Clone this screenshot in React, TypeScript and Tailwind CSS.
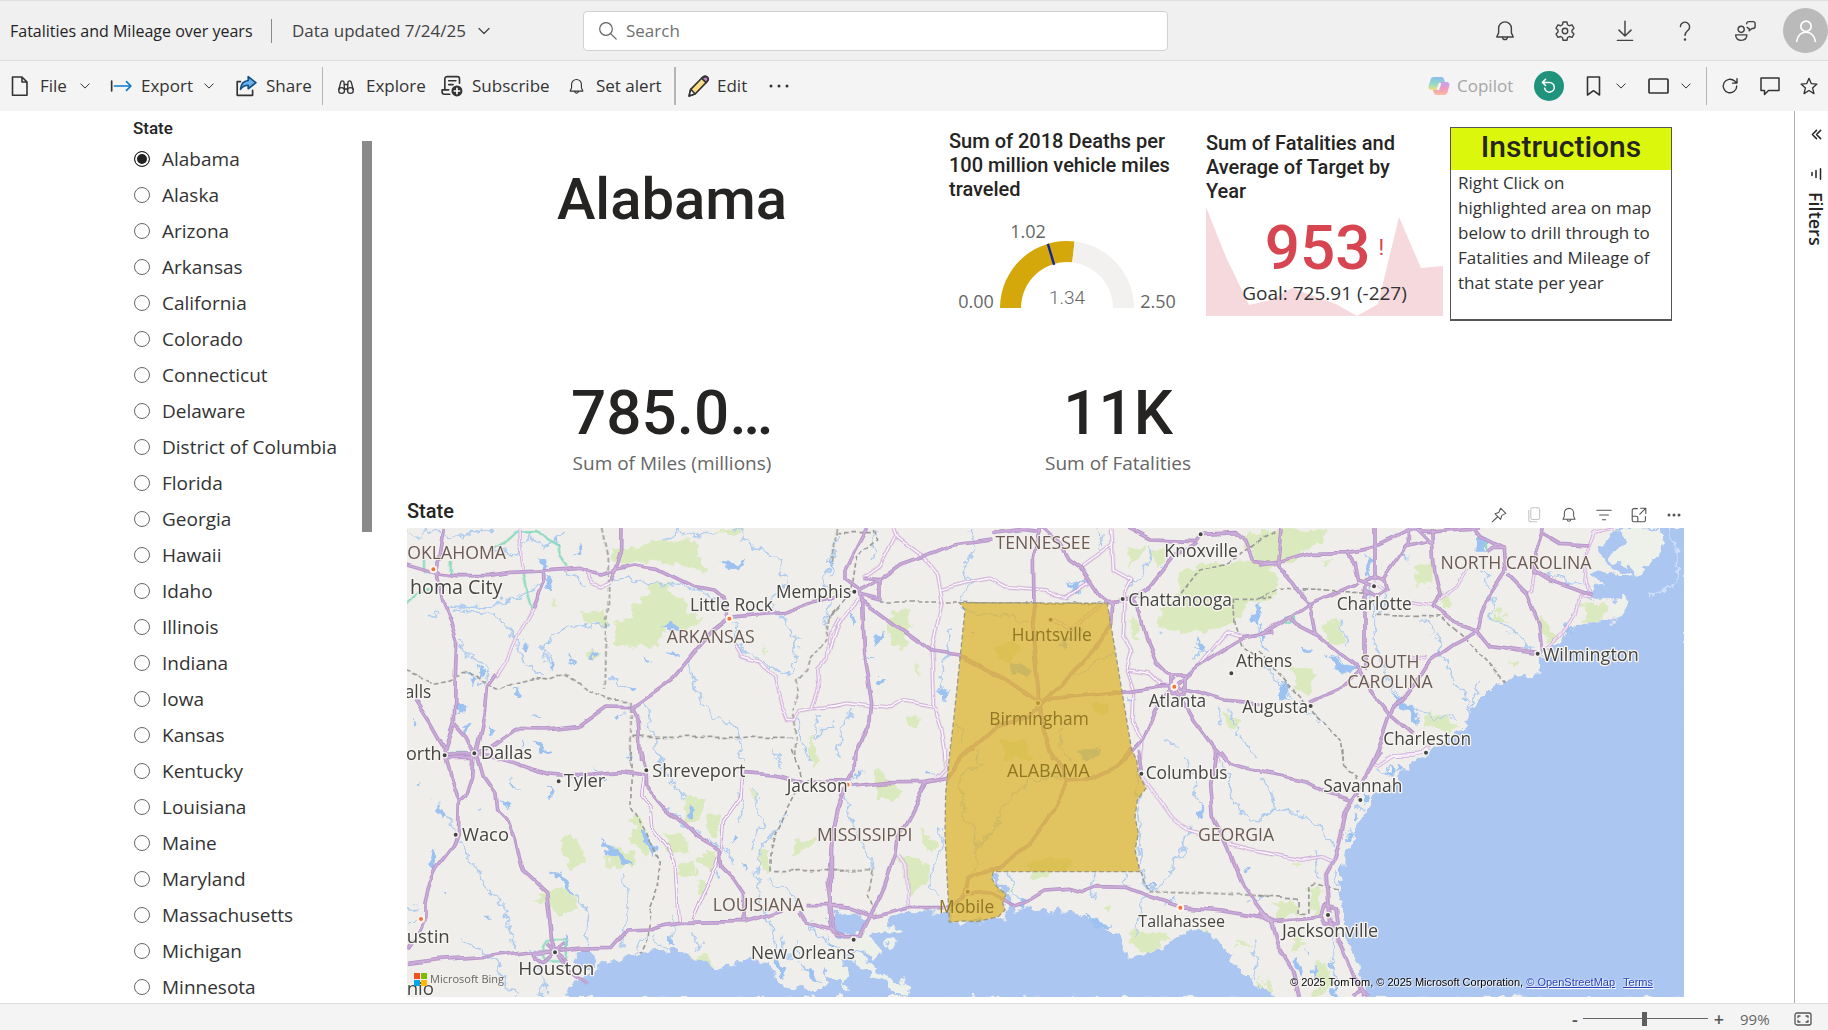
import React, { useState } from "react";

const STATES = [
  "Alabama", "Alaska", "Arizona", "Arkansas", "California", "Colorado", "Connecticut", "Delaware",
  "District of Columbia", "Florida", "Georgia", "Hawaii", "Idaho", "Illinois", "Indiana", "Iowa",
  "Kansas", "Kentucky", "Louisiana", "Maine", "Maryland", "Massachusetts", "Michigan", "Minnesota",
];

type IconProps = { children: React.ReactNode; className?: string; box?: string; sw?: number };

function Icon({ children, className = "size-5", box = "0 0 20 20", sw = 1.3 }: IconProps) {
  return (
    <svg viewBox={box} className={className + " shrink-0"} fill="none" stroke="currentColor" strokeWidth={sw} strokeLinecap="round" strokeLinejoin="round" aria-hidden="true">
      {children}
    </svg>
  );
}

const Chevron = ({ className = "size-3" }: { className?: string }) => (
  <Icon box="0 0 12 12" className={className} sw={1.2}><path d="M1 3.5l5 5 5-5" /></Icon>
);

const Bell = ({ className }: { className?: string }) => (
  <Icon className={className}>
    <path d="M10 1.7a5.8 5.8 0 0 0-5.8 5.8v4.2L2.5 15.4h15l-1.7-3.7V7.5A5.8 5.8 0 0 0 10 1.7z" />
    <path d="M7.8 15.6a2.2 2.2 0 0 0 4.4 0" />
  </Icon>
);

const Gear = () => (
  <Icon className="size-[22px]" box="0 0 24 24" sw={1.5}>
    <path d="M9.9 2.2h4.2l.7 3 1.9 1.1 3-.9 2.1 3.6-2.2 2.1v2.1l2.2 2.1-2.1 3.6-3-.9-1.9 1.1-.7 3H9.9l-.7-3-1.9-1.1-3 .9-2.1-3.6 2.2-2.1v-2.1L2.2 9l2.1-3.6 3 .9 1.9-1.1z" />
    <circle cx="12" cy="12" r="3" />
  </Icon>
);

/* ---------- Map data: six regional tiles of coast, parks, rivers and roads ---------- */

type Tile = {
  t: string;
  water: string[];
  land?: string[];
  parks: string[];
  rivers: string[];
  lakes: string[];
  borders: string[];
  major: string[];
  minor: string[];
  teal?: string[];
};

const TILES: Tile[] = [
  {
    t: "translate(0 0)",
    water: [],
    parks: [
      "M625 180L700 170 790 150 885 148 890 190 920 230 900 245 830 220 740 215 640 210z",
      "M955 114H1025L1010 140 970 128z",
      "M735 280L805 278 800 300 860 330 850 375 910 380 890 410 800 420 770 465 700 470 640 460 650 400 700 385 690 345 745 320z",
      "M540 370L620 365 622 400 560 400z",
      "M545 485L595 480 590 508 550 505z",
      "M445 330L480 335 460 345z",
      "M1235 740L1250 730 1245 810 1225 810z",
      "M1085 455L1110 490 1095 495z",
    ],
    rivers: [
      "M21 130L60 140 100 120 150 145 220 130 280 114",
      "M290 180L340 200 380 130 430 170 470 150 490 120",
      "M80 370L130 375 M130 345L220 355 290 340 360 320 400 300 430 260",
      "M160 360L260 370 320 390 335 440 370 500 400 540 430 560",
      "M170 450L200 500 260 520 265 560 240 590",
      "M440 520L430 470 460 430 520 410 620 400",
      "M480 245L530 260 560 290 M640 260L700 275 800 285 900 300 970 340",
      "M800 150L830 125 900 135 960 120",
      "M1000 114L1060 170 1140 210 1160 270 1120 330 1150 400 1190 450 1195 510 1160 560",
      "M1000 390L1010 460 1060 500 1130 540 1180 550",
      "M860 510L885 570 890 620 940 680 1010 710 1020 780 1025 810",
      "M620 560L660 580 710 600 M730 630L750 680 760 740 775 810",
      "M1310 130L1300 200 1270 260 1290 330 1270 400",
      "M1200 670L1195 740 1230 810 M1250 670L1255 740 1300 700",
    ],
    lakes: [
      "M415 200l20 5 8 30-10 20zM440 250l25 20-15 40-15-20zM545 165l-10 25-20 20 15-30zM470 130l20 25-10 10z",
      "M960 215l40 5 40-10-20 20-25 10z M780 410l40-5 25 10-30 15z M800 480l50 15-30 5z",
      "M370 455l20 15-15 15z M575 480l10 15-5 20-10-15z M505 490l15 15-10 15z",
      "M340 600l30 5-15 15zM395 680l30 2-20 8zM640 680l30-10-20 30zM180 640l30 10-35 30zM190 700l20 10-20 25zM270 710l15 20-15 10zM365 760l25 20-10 15zM400 750l45 30-20 10zM580 770l35 20zM200 540l30 30-15 20zM230 520l30 30-20 20z",
      "M440 490l20 40-10 5zM1090 460l15 30zM730 500l20 5-10 12zM680 590l35 10-15 5zM35 690l15 10-10 15z",
    ],
    borders: [
      "M608 114L625 200 620 420 615 600",
      "M21 545L60 560 100 580 150 570 190 550 240 570 300 600 340 580 400 565 450 570 490 553 520 570 560 600 640 630 693 632",
      "M693 632V810", "M700 742H1185",
      "M1312 114L1300 220 M1320 350L1290 380 1280 450 1230 500 1220 540 1190 570 1200 600 1180 660 1190 740 1190 800",
    ],
    major: [
      "M21 225L90 245 170 257 270 257 330 247 450 242 540 235 600 252 640 240 700 225 770 235 830 265 880 290 940 300 970 325 985 385",
      "M985 385L1010 380 1150 368 1240 335 1320 315",
      "M133 114L120 200 110 260 125 330 150 390 170 450 165 590 163 700 135 790",
      "M163 700L200 740 225 790",
      "M430 242L432 280 400 355 M290 550L262 590 255 680 230 790",
      "M230 795L270 770 345 718 430 720 535 710 620 648 695 650 760 605 820 560 890 475 940 420 985 385",
      "M695 650L715 700 722 810",
      "M666 114L665 180 650 230 630 270",
      "M45 630L90 700 135 780",
    ],
    minor: [
      "M400 355L350 440 320 510 290 560",
      "M565 245L570 280 600 290 625 275",
      "M360 114L362 200 368 250",
      "M1005 465L1025 500 1080 515 1120 560 1140 640 1160 688 1185 690 1200 662 1240 655 1320 645",
      "M1235 655L1255 600 1250 540 1285 505 1290 440 1320 380",
    ],
    teal: ["M280 175L300 165 350 122 410 120 440 150 475 170 480 200 500 230", "M368 250L380 310 395 360", "M21 345L50 310 90 300", "M155 210V257", "M75 210V250"],
  },
  {
    t: "translate(0 780)",
    water: [
      "M500 745L510 710 560 685 600 650 640 635 700 615 760 608 820 605 870 615 920 640 960 655 1005 645 1010 625 1060 632 1110 645 1125 690 1165 715 1200 705 1240 730 1290 700 1340 715V745z",
      "M520 640L545 600 575 605 590 640 560 670z",
      "M1280 500L1300 490H1330V555L1290 535z",
    ],
    parks: [
      "M480 270L510 250 555 300 550 340 510 355z", "M395 450L460 412 525 430 530 470 480 500 440 460z",
      "M620 310L650 290 710 310 700 350 630 355z", "M690 230L710 190 750 260 740 320 700 280z",
      "M850 140L915 150 905 200 860 220z", "M925 195L960 190 960 260 930 255z", "M790 250L845 245 870 300 800 305z",
      "M900 310L955 300 945 370 905 350z", "M835 350L890 345 885 370 835 370z", "M890 390L920 395 915 430 890 420z",
      "M1180 270L1250 260 1230 300 1170 310z", "M870 612L930 625 950 645 900 635z", "M1225 0H1250L1240 60z M1040 110L1070 140 1060 160z M1075 310L1110 300 1100 380z", "M1035 640L1070 640 1065 655z",
    ],
    rivers: [
      "M105 155L130 190 165 240 190 300 240 370 270 430 310 460 330 530 345 600",
      "M180 560L240 600 290 640 310 690 350 741", "M400 610L430 680 430 741",
      "M530 440L560 480 555 560 570 600", "M665 380L685 430 680 540 660 600",
      "M770 0L790 60 850 140", "M800 180L870 240 960 290 1010 340",
      "M1160 200L1120 250 1080 300 1070 400 1090 470 1120 560 1130 640", "M1110 390L1180 430 1250 560 1320 600",
      "M880 540L900 600 M760 560L800 600 M700 610L740 560", "M1060 120L1090 220 1040 300 M1025 130L1020 220",
      "M820 490L815 590 M1150 560L1170 640", "M20 480L50 470 M21 520L60 500",
      "M1130 0L1140 60 M700 0L690 30",
    ],
    lakes: [
      "M720 230l25 20 25 50-10 25-25-40z M600 275l50 20 50 45-20 10-45-35z M455 365l40 20 35 50-10 5-40-40z M115 155l15 30-15 15z",
      "M300 150l40 15-30 15zM330 80l30 40-20-5zM440 100l20 20-10 30zM580 60l50 30-20 0zM90 310l25-10-15 60-15-10zM100 340l10-25zM120 420l15 0-8 10zM880 160l5 30-20 10zM1025 250l-30 30 15-30z",
      "M245 500l25 0-15 8zM500 550l5 50-15-10zM810 550l15 40-15 0zM1020 590l20 10zM890 550l10 10zM950 355l10 20-5 10zM1030 340l15 5-5 15zM60 90l5 20-10-5zM225 170l20 5-15 5zM680 10l20 10-10 5z",
      "M1120 620l20 60 20 10-20-60zM1180 560l20 60-10-10zM1200 640l40 20 20 40-30-10zM1140 580l20 40zM1280 560l25 30-10 5zM1270 600l30 60-20-10z",
    ],
    borders: [
      "M693 0V180L740 250 780 340 770 420 750 470 745 560 720 610",
      "M1180 0L1200 60 1205 90 1160 180 1130 240 1110 300 1110 362 H1330",
    ],
    major: [
      "M135 15L160 100 178 155 175 250 160 290 110 355 85 410 75 460 75 505 50 560 21 600",
      "M222 10L218 80 200 135 178 155",
      "M230 10L250 80 285 130 290 180 325 215 345 270 370 360 440 425 455 570 465 605",
      "M225 10L350 40 440 72 480 75 580 72 660 65 735 75",
      "M135 15H230 M135 25H225",
      "M21 640L120 628 280 618 390 603 465 605 550 597 635 595 680 543 745 540 790 523 835 517 1035 515 1120 490 1150 480",
      "M722 0L738 60 740 110 800 180 850 220 890 260 960 300 965 350 1000 385 1030 430 1033 515",
      "M1030 68L1120 75 1190 92 1340 96",
      "M1320 150L1300 230 1285 400 1305 540",
      "M1220 467H1330", "M1200 485L1220 520 1300 540 1330 557",
      "M465 605L510 670 560 705", "M465 605L400 610 405 625 430 640 465 605 500 635 M465 605L440 580 M465 605L495 580",
    ],
    minor: [
      "M732 85L725 140 750 170 755 230 800 290 825 340 835 517",
      "M1025 70L1020 140 970 210 965 300 950 350 900 450 875 510",
    ],
    teal: ["M440 570H500V620L490 637H440L430 620V585z", "M150 12H205 M150 20H205"],
  },
  {
    t: "translate(1290 0)",
    water: [],
    parks: [
      "M175 380L235 350 240 430 220 470 180 460z", "M500 470L550 450 575 480 540 510 500 500z",
      "M1040 250L1120 220 1330 200V330L1250 340 1210 400 1130 420 1060 430 980 400 1000 340 1060 310z",
      "M900 380L930 400 920 450 895 430z", "M255 520L275 540 265 560z", "M230 680L270 690 260 710 230 705z",
      "M890 180L960 170 900 230z", "M510 750L590 745 600 810 520 810z", "M780 650L840 640 820 680z", "M1180 670L1240 690 1200 720z", "M1230 150L1330 114V200L1280 210z", "M0 280L30 300 0 330z M960 190L1010 170 990 240z",
    ],
    rivers: [
      "M420 114L430 180 400 240 420 290 390 320 380 340", "M370 410L350 500 330 560 345 640",
      "M400 350L440 380 520 370 600 400 M700 470L760 420",
      "M970 180L930 250 900 300 M1030 170L1000 230", "M1290 340L1280 440 1310 490",
      "M20 800L30 720 70 660", "M720 270L760 300 M820 130L800 180",
      "M1200 660L1220 730 1270 780 1280 810 M1010 750L1050 780", "M140 120L120 170 130 210",
      "M700 690L690 760 720 810 M380 700L400 760 M1090 500L1140 480 M1160 640L1170 700", "M740 560L800 520 850 490",
    ],
    lakes: [
      "M700 275l40 15 20-15-10 30-30-5z M120 445l50-20-30 35z M105 510l30 0-20 10z M130 570l40 0-30 15zM530 510l70 20-20 30-30-10z M690 470l30-20-10 20z M65 370l15 20-10 15zM420 430l25 5-15 5z",
      "M1095 480l20-35 10 30-15 20zM1280 350l15 20-10 40-10-20zM990 420l8 10-10 0zM330 590l20 10-15 40zM800 120l25 40-5 10zM770 780l40-10-20 30zM0 200l10 30-5 30zM1060 210l20 10zM900 620l10 5-5 10zM1190 700l20 30zM1110 645l20 20z",
    ],
    borders: ["M150 336H380", "M400 338L830 340 870 326H940 M1210 325H1330", "M20 128H130", "M130 120L140 150 80 200 70 270 60 310 0 380", "M1330 125L1240 190 1190 220 1110 240 1040 330", "M1210 325L1215 400 1240 470 1280 500"],
    major: [
      "M110 114L45 240 45 270 90 305", "M90 305L95 330 100 480 125 640 120 690 75 790 72 810",
      "M90 305L150 272 215 225 285 200 370 165 490 150", "M490 130L570 118 630 125",
      "M95 330L190 400 305 483 390 495 430 515 530 570 625 635",
      "M630 114L610 200 612 350 605 400 625 600 625 635 640 720 670 810",
      "M640 114L690 160 715 205 750 230 810 320 845 345", "M845 335L842 400 760 520 700 580 640 630 600 680 500 710 400 800",
      "M640 630L760 620 870 608 1000 590 1035 590",
      "M890 114L960 150 1100 155 1120 130 1210 125 1250 150 1275 215 1330 222",
      "M1105 160L1030 200 950 300 900 330 830 335", "M900 320L930 370 950 450 980 520 1030 570",
      "M1035 590L1100 530 1180 480 1245 440 1330 425", "M1035 590L1100 605 1180 630 1290 640",
      "M1035 590L975 660 935 750 880 810", "M1035 590L1090 690 1150 770 1190 810", "M1020 555H1065V610H1020z", "M150 272V330L90 315 M100 268L150 272",
    ],
    minor: [
      "M190 114L200 140 280 200 320 250 335 340 305 480 310 640 335 720 350 810",
      "M195 140L150 230 100 265", "M325 300L420 275 480 265 530 290 610 297 650 300 710 325 780 280",
      "M845 114L850 240 905 270 885 310 885 340 880 440 905 480 890 540 910 600 905 700 935 750 930 810",
      "M895 540L960 550 995 585", "M1100 530L1190 425 1245 440", "M0 650L50 640 130 650 180 655 220 632 310 648",
      "M0 490L30 400 85 330", "M755 230L850 160", "M1150 770L1160 810", "M670 385L700 400 720 420 810 340",
    ],
  },
  {
    t: "translate(1290 780)",
    water: [
      "M-30 745L0 700 -20 660 30 640 60 600 100 580 110 560 140 550 180 515 210 495 260 485 355 488 358 517 430 517 500 512 528 505 528 450 515 420 500 400 490 375 497 370 512 400 540 430 550 480 600 480 680 483 740 495 790 520 830 540 865 565 880 600 900 620 920 625 960 605 1000 590 1040 565 1080 545 1130 545 1160 570 1195 610 1210 640 1260 680 1265 715 1310 720 1335 745z",
      "M15 520L60 485 118 507 100 545 60 557 20 545z",
    ],
    land: [
      "M60 560L110 550 160 610 130 620 100 600 70 610z", "M-20 620L40 640 60 680 40 700 -10 680z",
      "M60 620L100 610 150 670 210 690 240 720 235 741 190 741 170 700 110 670z", "M30 700L70 715 50 730z",
      "M140 520L215 545 200 550 150 540z M155 570L215 575 190 600z",
    ],
    parks: [
      "M135 60L150 50 160 90 210 110 205 150 140 150z", "M540 0L600 0 590 25 545 20z",
      "M270 240L320 270 320 300 290 300z", "M205 330L240 320 290 340 290 400 240 440 225 370z",
      "M590 340L660 330 730 325 735 350 660 365 600 395z", "M900 540L1000 550 1030 560 960 605 920 600z",
      "M820 470L850 460 835 490z", "M1210 575L1270 580 1220 595z", "M1080 545L1130 540 1160 570 1130 565z", "M540 380L560 420 540 430z",
    ],
    rivers: [
      "M45 130L65 210 100 290 130 360", "M330 240L340 290 295 390 320 440", "M430 0L460 50 400 60 390 150 410 210 440 260 430 370",
      "M720 80L590 90 560 130 510 180 510 220 460 270 430 300", "M930 50L920 190 935 370 960 420 990 415 1040 330 1075 260 1080 230",
      "M1090 80L1100 140 1120 190 M1180 40L1210 160 1270 210 1320 190", "M940 430L930 490 920 560",
      "M540 370L545 410 580 450 M785 365V450 M885 370L900 410", "M1060 30L1090 80 M1270 560L1280 620 1270 690",
      "M1250 460L1300 440 M1010 460L1040 440",
    ],
    lakes: [
      "M80 65l25-5-35 30zM750 0l50-5 10 20-40 10zM285 60l20 0-15 8zM950 405l30 0-10 12z M1105 170l10 0 5 25-12 0z M755 485l30 20 60 20-20 10-50-20z M1245 360l15 0-10 20z",
      "M790 530l70 20 20 40-20-5z M570 440l30 20-20 20zM490 370l8 40 25 20-20-10z",
    ],
    borders: ["M0 362H130L115 430 140 500", "M930 365L955 425 1100 430 1330 442"],
    major: [
      "M78 0L75 60 50 105 20 170 5 260 3 467", "M50 110L170 98 290 97 350 85 400 20 430 0",
      "M290 97L240 200 200 270 195 310 160 410 120 500 90 560 20 560 5 530 0 467",
      "M0 467L60 475 130 500 240 473 340 473", "M660 0L700 60 710 95 670 180 600 280 500 350 415 385 405 440 350 473",
      "M405 435L480 430 550 465", "M710 93L760 90 860 50 900 0",
      "M550 465L590 450 640 420 720 415 760 425 800 410 890 412 960 440 1050 470 1180 480 1290 500 1330 520",
      "M1155 0L1142 100 1150 200 1190 290 1240 410 1330 530", "M1170 0L1200 40 1330 75", "M925 0L935 75",
    ],
    minor: [
      "M935 75L980 140 1030 210 1075 240 1110 250", "M205 315L230 360 235 470",
      "M1200 285L1260 300 1330 315", "M350 0L345 60 320 85",
    ],
  },
  {
    t: "translate(2580 0)",
    water: [
      "M1280 110H1070L1050 130 1060 150 1020 170 1035 200 1060 240 1130 265 1080 262 1020 245 990 250 1040 285 1000 290 1010 320 1040 330 1090 320 1110 345 1070 400 1000 395 960 405 910 440 870 475 845 510 830 560 780 560 730 575 690 600 650 640 620 700 600 725 570 745 540 770 510 800 480 820H1280z",
    ],
    land: ["M1080 118L1190 114 1212 150 1200 200 1150 230 1130 262 1100 230 1060 225 1045 190 1100 160z", "M1045 350L1090 320 1112 345 1075 400z"],
    parks: [
      "M0 120L30 114 200 118 180 160 80 210 0 240z", "M190 410L240 390 250 460 200 460z", "M460 230L510 220 520 280 480 290z",
      "M970 340L1040 350 1030 390 975 395z", "M850 380L890 440 870 460 840 420z", "M90 530L165 540 150 620 120 610z",
      "M490 680L530 665 600 715 560 735 500 705z", "M700 350L740 380 750 400 710 390z", "M180 205L215 210 200 225z",
      "M740 505L770 515 760 525z", "M0 240L60 250 40 310 0 320z", "M540 310L580 340 550 350z M1130 140L1150 150 1145 165z",
    ],
    rivers: [
      "M325 190L330 270 340 440 370 530 400 600 450 650", "M380 310L350 380", "M530 430L545 500 570 560 620 610 630 690",
      "M660 250L700 300 690 370 760 430 820 480", "M240 380L260 470 M120 640L40 560 0 500",
      "M1000 330L980 290 910 270 870 240", "M660 570L640 620 630 680", "M430 180L440 220 M210 490L260 520",
      "M120 650L180 690 M480 380L520 430 M450 640L520 680 600 690",
    ],
    lakes: [
      "M390 600l20 25 50 20 20 25-10 30-20-35-40-15z M650 150h28v35h-28z M315 190l20 20 0 50-15-20z M200 490l50 30 50 10-30 20-50-20z M70 570l20 60-30-10z",
      "M910 390l30 30-20 10zM1080 330l20 20zM435 190l10 0 0 30zM120 470l40 20-30 5zM0 400l8 40-8 20zM690 120l30 30zM580 540l20 25z",
    ],
    borders: ["M0 325L60 295 170 298 320 310", "M350 373L540 378 620 450 740 575", "M0 480L40 540 120 620 170 680 240 750 250 810"],
    major: [
      "M60 114L50 225 100 280 150 350 165 430 240 490 290 530 330 600 385 670 460 735",
      "M0 225L60 215 160 190 260 188 340 172 440 125 470 114", "M260 188L280 220 290 270 340 290",
      "M345 114V270", "M0 435L90 380 150 340 290 280", "M90 380L120 410 170 435",
      "M370 270L440 170 520 150", "M515 114L520 200 525 250 540 310 520 350 590 400 650 420",
      "M735 240L690 310 665 370 655 420 580 460 510 510 460 590 400 650 370 740 335 820",
      "M650 420L690 470 750 478 830 490", "M740 250L800 310 840 400 848 490",
      "M850 114L825 190 822 250", "M850 130L900 160 985 165", "M820 240L870 270 930 290 995 315",
      "M640 114L660 140 730 175 735 240", "M450 118L520 122 660 114", "M445 120V170 M470 114L515 160",
      "M315 300V510L315 540", "M150 640L240 600 300 540", "M345 260L375 270 382 300 350 320 310 300 315 270z", "M690 175H735 M680 185L710 165",
    ],
    minor: [
      "M450 335L515 345 590 290 620 240", "M1060 116L1000 130 985 165 975 270 990 320 960 315 950 370 900 440 860 480",
      "M822 250L815 300 800 310", "M340 275L380 310", "M380 805L400 795 460 795 510 780", "M500 500L460 498",
    ],
    teal: ["M678 155V185", "M75 380H105V395H75"],
  },
  {
    t: "translate(2580 780) scale(1.0867 1)",
    water: [
      "M490 -10L450 25 400 55 375 90 345 115 310 155 290 200 265 240 255 290 235 320 230 370 228 400 222 440 230 490 235 530 245 580 265 630 280 680 300 745H1180V-10z",
    ],
    parks: [
      "M40 460L100 450 105 500 50 510z", "M130 410L170 420 165 490 140 480z", "M150 640L185 640 200 700 180 741 150 741 160 690z",
      "M85 340L110 340 100 352z", "M20 680L45 710 30 741z", "M95 540L120 580 100 600z", "M0 680L20 720 0 741z",
    ],
    rivers: [
      "M0 210L40 175 100 185 170 230 205 285", "M0 90L30 110 45 175", "M150 310L155 370 170 385",
      "M200 540L210 600 195 640 220 700", "M320 60L360 80 400 50", "M260 170L290 180 M240 240L260 260", "M205 370L220 420",
    ],
    lakes: [
      "M105 620l-10 30 25 30 0-20zM145 655l10 40 0-40zM190 620l15 30-5 10zM120 600l10 5-8 8zM0 710l15 20-15 20zM200 700l20 35-20 0z",
      "M355 50l15 25-20 5zM380 40l20 10-20 15zM255 185l20 10-10 20zM235 250l20 5-15 20zM285 140l20 10-15 10zM230 330l0 60-10-20z",
    ],
    borders: ["M228 0L230 45 265 80 275 140 290 150", "M0 440L105 448V490H132V410L150 400 215 420"],
    major: [
      "M335 0L310 40 280 110 255 150 235 190 225 250 205 330 185 370 190 470 195 520 230 600 260 680 290 741",
      "M0 68L60 80 130 97 180 125 250 150", "M0 490L30 515 100 510 170 500", "M0 480L30 515 50 590 90 660 108 741",
      "M180 470L210 480 215 520 180 525 170 500z", "M260 741L280 720 300 741",
    ],
    minor: ["M0 305L60 318 120 330 170 320 200 335", "M310 40L330 45 370 15 450 8 470 -10"],
  },
];

/* name, x, baseline, optional size for the larger cities */
const CITIES: [string, number, number, number?][] = [
  ["homa City", 30, 311, 59], ["Little Rock", 870, 363], ["Memphis", 1128, 325], ["alls", 14, 624], ["orth", 18, 810, 54], ["Dallas", 242, 808, 55],
  ["Tyler", 491, 891, 55], ["Shreveport", 757, 862, 54], ["Jackson", 1160, 906], ["Waco", 186, 1054, 55], ["ustin", 20, 1358, 56], ["Houston", 355, 1456, 57],
  ["New Orleans", 1053, 1408], ["Knoxville", 2293, 200, 53], ["Chattanooga", 2185, 347], ["Atlanta", 2246, 651], ["Athens", 2508, 530],
  ["Augusta", 2527, 668], ["Columbus", 2237, 868], ["Tallahassee", 2215, 1312, 48], ["Charlotte", 2810, 360], ["Wilmington", 3428, 512, 54],
  ["Charleston", 2950, 766], ["Savannah", 2770, 906], ["Jacksonville", 2646, 1342, 54], ["nio", 20, 1516, 56],
];
const REGIONS: [string, number, number][] = [
  ["OKLAHOMA", 170, 206], ["ARKANSAS", 932, 459], ["TENNESSEE", 1929, 177], ["NORTH CAROLINA", 3348, 236], ["SOUTH", 2970, 533],
  ["CAROLINA", 2970, 593], ["MISSISSIPPI", 1394, 1054], ["LOUISIANA", 1075, 1263], ["GEORGIA", 2508, 1054],
];
const SHADED: [string, number, number, number][] = [["Huntsville", 1955, 452, 52], ["Birmingham", 1917, 705, 52], ["ALABAMA", 1945, 861, 54], ["Mobile", 1700, 1270, 52]];
const DOTS: [number, number][] = [
  [1363, 305], [134, 796], [223, 790], [476, 874], [739, 841], [167, 1034], [465, 1387], [1361, 1349], [2402, 133], [2168, 327],
  [2494, 550], [2732, 648], [2224, 851], [2922, 289], [3413, 491], [3078, 788], [2881, 930], [2784, 1275], [1952, 389], [1914, 639], [1703, 1205],
];
const CAPITALS: [number, number][] = [[100, 238], [988, 386], [2323, 590], [1343, 884], [63, 1287], [2341, 1253]];

const ALABAMA =
  "M1678 338L2122 340 2195 780 2210 810 2215 850 2238 895 2212 930 2205 980 2215 1030 2205 1080 2220 1145 1780 1145 1775 1165 1790 1190 1818 1212 1808 1240 1815 1260 1795 1280 1730 1295 1690 1293 1648 1297 1635 1030 1637 910 1650 780 1660 700 1695 360z";

function MapDrawing() {
  const each = (fn: (t: Tile) => React.ReactNode) => TILES.map((t) => <g key={t.t} transform={t.t}>{fn(t)}</g>);
  const paths = (list: string[] = []) => list.map((d) => <path key={d} d={d} />);
  return (
    <svg viewBox="21 114 3831 1407" preserveAspectRatio="xMidYMid slice" className="absolute inset-0 size-full" role="img" aria-label="Map of the southeastern United States with Alabama highlighted">
      <defs>
        <filter id="rough" x="0" y="0" width="1" height="1" primitiveUnits="userSpaceOnUse">
          <feTurbulence type="fractalNoise" baseFrequency="0.03" numOctaves="3" seed="4" />
          <feDisplacementMap in="SourceGraphic" scale="45" xChannelSelector="R" yChannelSelector="G" />
        </filter>
        <filter id="wavy" x="0" y="0" width="1" height="1" primitiveUnits="userSpaceOnUse">
          <feTurbulence type="fractalNoise" baseFrequency="0.012" numOctaves="2" seed="9" />
          <feDisplacementMap in="SourceGraphic" scale="22" xChannelSelector="R" yChannelSelector="G" />
        </filter>
      </defs>
      <rect x="0" y="0" width="3900" height="1600" fill="#efeeea" />
      <g filter="url(#rough)">
        <rect x="-100" y="-100" width="4100" height="1800" fill="#efeeea" />
        <g fill="#dae9be">{each((t) => paths(t.parks))}</g>
        <g fill="none" stroke="#afcdf0" strokeWidth="5">{each((t) => paths(t.rivers))}</g>
        <g fill="#9cc2f2">{each((t) => paths(t.lakes))}</g>
        <g fill="#abc6f1" stroke="#abc6f1" strokeWidth="3">{each((t) => paths(t.water))}</g>
        <g fill="#eef0ea">{each((t) => paths(t.land))}</g>
        <path d="M3805 114Q3845 200 3830 285M3745 318L3825 285" fill="none" stroke="#cfe0f7" strokeWidth="5" />
      </g>
      <g fill="none" strokeLinejoin="round" filter="url(#wavy)">
        <g stroke="#9b9b99" strokeWidth="5" strokeDasharray="14 8">{each((t) => paths(t.borders))}</g>
        <g stroke="#8fdcc0" strokeWidth="7">{each((t) => paths(t.teal))}</g>
        <g stroke="#c79fd3" strokeWidth="10">{each((t) => paths(t.minor))}</g>
        <g stroke="#fbf7fc" strokeWidth="5">{each((t) => paths(t.minor))}</g>
        <g stroke="#b592c9" strokeWidth="11">{each((t) => paths(t.major))}</g>
        <g stroke="#d3b8dd" strokeWidth="4">{each((t) => paths(t.major))}</g>
      </g>
      {CAPITALS.map(([x, y]) => (
        <circle key={x} cx={x} cy={y} r="9" fill="#f0743e" stroke="#fff4ea" strokeWidth="6" />
      ))}
      {DOTS.map(([x, y]) => (
        <circle key={x} cx={x} cy={y} r="8" fill="#444" stroke="#f6f4f2" strokeWidth="4" />
      ))}
      <path d={ALABAMA} fill="#dbb22c" fillOpacity="0.73" stroke="#9c9a86" strokeWidth="4" strokeDasharray="14 8" />
      <g fontFamily="'Open Sans', 'Noto Sans', sans-serif" fontSize="52" fontWeight="500">
        <g fill="#454545" stroke="#f7f5f1" strokeWidth="8" strokeLinejoin="round" paintOrder="stroke">
          {CITIES.map(([n, x, y, size]) => <text key={n} x={x} y={y} fontSize={size}>{n}</text>)}
        </g>
        <g fill="#6b5a54" stroke="#f3f0ec" strokeWidth="6" strokeLinejoin="round" paintOrder="stroke" textAnchor="middle" fontSize="53">
          {REGIONS.map(([n, x, y]) => <text key={n} x={x} y={y}>{n}</text>)}
        </g>
        <g fill="#8f7726" textAnchor="middle">
          {SHADED.map(([n, x, y, size]) => <text key={n} x={x} y={y} fontSize={size}>{n}</text>)}
        </g>
      </g>
    </svg>
  );
}

function Gauge() {
  const arc = (r: number, a: number) => {
    const rad = Math.PI - (a * Math.PI) / 180;
    return `${(118 + r * Math.cos(rad)).toFixed(2)} ${(89 - r * Math.sin(rad)).toFixed(2)}`;
  };
  const band = (a: number, b: number) => `M${arc(67, a)}A67 67 0 0 1 ${arc(67, b)}L${arc(46, b)}A46 46 0 0 0 ${arc(46, a)}z`;
  return (
    <svg viewBox="0 0 245 96" className="mt-[18px] w-full" role="img" aria-label="Gauge 1.34 of 2.50, target 1.02" fontFamily="'Open Sans', sans-serif" fontSize="18" fill="#666">
      <path d={band(0, 96.5)} fill="#d4a70b" />
      <path d={band(96.5, 180)} fill="#f2f1f0" />
      <path d={`M${arc(67, 73.4)}L${arc(45, 73.4)}`} stroke="#12239e" strokeWidth="2.4" />
      <text x="79" y="19" textAnchor="middle">1.02</text>
      <text x="27" y="89" textAnchor="middle">0.00</text>
      <text x="209" y="89" textAnchor="middle">2.50</text>
      <text x="118" y="85" textAnchor="middle" fontFamily="Roboto, sans-serif" fontSize="19" fontWeight="300">1.34</text>
    </svg>
  );
}

const toolBtn = "flex h-full shrink-0 items-center whitespace-nowrap";

function TopBar() {
  return (
    <header className="flex h-[61px] shrink-0 items-center border-y border-[#dfdfdf] bg-[#f0f0f0]">
      <div className="flex w-[583px] shrink-0 items-center pl-[10px] text-[#242424]">
        <h1 className="w-[261px] whitespace-nowrap text-[16px]">Fatalities and Mileage over years</h1>
        <span className="h-6 w-px bg-[#8a8a8a]" />
        <button className="ml-5 flex items-center gap-3 whitespace-nowrap text-[17px] text-[#424242]">
          Data updated 7/24/25 <Chevron />
        </button>
      </div>
      <label className="flex h-10 min-w-0 max-w-[585px] flex-1 items-center gap-2 rounded-[4px] border border-[#d1d1d1] bg-white pl-[14px] text-[#616161]">
        <Icon className="size-5" sw={1.2}><circle cx="8" cy="8" r="6.3" /><path d="M12.6 12.6l5.6 5.6" /></Icon>
        <input type="text" placeholder="Search" aria-label="Search" className="min-w-0 flex-1 bg-transparent text-[17px] outline-none placeholder:text-[#707070]" />
      </label>
      <div className="ml-auto flex shrink-0 items-center text-[#424242]">
        <button aria-label="Notifications" className="flex w-[60px] justify-center"><Bell className="size-[22px]" /></button>
        <button aria-label="Settings" className="flex w-[60px] justify-center"><Gear /></button>
        <button aria-label="Download" className="flex w-[60px] justify-center">
          <Icon className="size-[22px]"><path d="M10 1v13.5M4.5 9.2L10 14.6l5.500-5.400M3 18.500h14" /></Icon>
        </button>
        <button aria-label="Help" className="flex w-[60px] justify-center">
          <Icon className="size-[22px]"><path d="M5.800 6a4.200 4.200 0 1 1 7 3.300C11.300 10.700 10 11.500 10 14" /><circle cx="10" cy="17.800" r=".5" fill="currentColor" /></Icon>
        </button>
        <button aria-label="Feedback" className="flex w-[60px] justify-center">
          <Icon className="size-[22px]"><circle cx="6.500" cy="8.500" r="2.800" /><path d="M1.500 13.500h10.200c0 3.400-2 5-5.100 5s-5.100-1.600-5.100-5zM11.500 3.500a2 2 0 0 1 2-2h3.700a2 2 0 0 1 2 2v2.200a2 2 0 0 1-2 2h-.9l-2.500 2.100V7.700a2 2 0 0 1-1.800-1" /></Icon>
        </button>
        <button aria-label="Account" className="ml-2 flex size-[45px] items-center justify-center rounded-full bg-[#bababa] text-white">
          <Icon className="size-[22px]" sw={1.5}><circle cx="10" cy="5.700" r="4.700" /><path d="M1.500 19.500c.5-5 4-8.500 8.500-8.500s8 3.500 8.500 8.500" /></Icon>
        </button>
      </div>
    </header>
  );
}

function ToolBar() {
  return (
    <nav aria-label="Report actions" className="flex h-[50px] shrink-0 items-center bg-[#f4f4f4] pl-[10px] text-[17px] text-[#333]">
      <button className={toolBtn + " w-[100px]"}>
        <Icon className="size-5" sw={1.6}><path d="M2.500 1h9.500l5 5v13.200H2.500zM12 1v5h5" /></Icon>
        <span className="ml-[10px] w-10 text-left">File</span><Chevron className="size-[10px]" />
      </button>
      <button className={toolBtn + " w-[125px]"}>
        <Icon className="size-[22px]" sw={1.5}><path d="M1.500 5.500v9" stroke="#333" /><path d="M4 10h15M15 6l4 4-4 4" stroke="#0f7ac8" /></Icon>
        <span className="ml-[9px] w-[63px] text-left">Export</span><Chevron className="size-[10px]" />
      </button>
      <button className={toolBtn + " w-[87px]"}>
        <Icon className="size-[22px]" sw={1.5}><path d="M5 6H2v12.500h14V14" /><path d="M12 1.500L19 7l-7 5.500V9.300c-3 0-5 1-7 3.700.3-4.300 2.600-7.500 7-8z" fill="#69b1ea" stroke="#124f86" /></Icon>
        <span className="ml-[9px]">Share</span>
      </button>
      <span className="h-[38px] w-px bg-[#b5b5b5]" />
      <button className={toolBtn + " ml-[13px] w-[105px]"}>
        <Icon className="size-5" sw={1.3}><circle cx="5.600" cy="14.500" r="2.900" /><circle cx="14.400" cy="14.500" r="2.900" /><path d="M2.800 13.500L4.800 6c.4-1.500 2.900-1.500 3.200.2l.5 8M17.200 13.500L15.200 6c-.4-1.500-2.900-1.500-3.200.2l-.5 8M8.300 8.500h3.400M8.600 13h2.800" /></Icon>
        <span className="ml-[10px]">Explore</span>
      </button>
      <button className={toolBtn + " w-[127px]"}>
        <Icon className="size-[22px]" sw={1.5}><path d="M8 17.500H3a2 2 0 0 1-2-2v-2h6M3.500 13.500v-10a2 2 0 0 1 2-2h9.300a2 2 0 0 1 2 2v4M7 5.200h6.500M7 8.700h4" /><circle cx="14.500" cy="14.500" r="5" fill="#333" stroke="none" /><path d="M14.500 12v5M12 14.500h5" stroke="#fff" /></Icon>
        <span className="ml-[9px]">Subscribe</span>
      </button>
      <button className={toolBtn + " w-[106px]"}>
        <Bell className="size-[17px]" /><span className="ml-[11px]">Set alert</span>
      </button>
      <span className="h-[38px] w-[2px] bg-[#b5b5b5]" />
      <button className={toolBtn + " ml-3 w-[81px]"}>
        <Icon className="size-[22px]" sw={1.5}><path d="M1 19l1.500-6L13 2.300c1.500-1.500 3.200-1.300 4.300-.3s1.200 2.700 0 4L6.500 17.300z" fill="#fbdc86" stroke="#333" /><path d="M12.500 3l3.800 3.800 1.200-1.200c1.300-1.300 1-2.700.2-3.500s-2.500-1-3.700.2z" fill="#c17fd0" stroke="#333" /><path d="M2.500 13l3.800 4L1 19z" fill="#fff" stroke="#333" /></Icon>
        <span className="ml-[7px]">Edit</span>
      </button>
      <button aria-label="More options" className={toolBtn}>
        <svg viewBox="0 0 20 4" className="h-1 w-5" fill="#333"><circle cx="2" cy="2" r="1.500" /><circle cx="10" cy="2" r="1.500" /><circle cx="18" cy="2" r="1.500" /></svg>
      </button>
      <div className="ml-auto flex h-full items-center">
        <button className={toolBtn + " w-[106px] text-[#a6a6a6]"}>
          <svg viewBox="0 0 22 20" className="h-5 w-[22px]" aria-hidden="true">
            <defs>
              <linearGradient id="cpA" x1="0" y1="0" x2="0" y2="1"><stop offset="0" stopColor="#86bdf0" /><stop offset=".6" stopColor="#9adcc0" /><stop offset="1" stopColor="#f3e07c" /></linearGradient>
              <linearGradient id="cpB" x1="0" y1="0" x2="0" y2="1"><stop offset="0" stopColor="#c4a2f2" /><stop offset=".55" stopColor="#f29bbd" /><stop offset="1" stopColor="#fbc09a" /></linearGradient>
            </defs>
            <path d="M6 1h7.500c1.600 0 2.200 1 2.700 2.500L17 6h-2.500c-1.500 0-2.300.8-2.800 2.300L10 14H3.500C1 14 0 12.300.7 9.800l2-6.500C3.300 1.800 4.300 1 6 1z" fill="url(#cpA)" />
            <path d="M16 19H8.500c-1.600 0-2.200-1-2.700-2.500L5 14h2.500c1.500 0 2.300-.8 2.800-2.300L12 6h6.500c2.500 0 3.500 1.700 2.800 4.200l-2 6.500C18.700 18.200 17.700 19 16 19z" fill="url(#cpB)" />
            <path d="M11.800 8l-1.700 5" stroke="#f4f4f4" strokeWidth="2.500" strokeLinecap="round" />
          </svg>
          <span className="ml-[7px]">Copilot</span>
        </button>
        <button aria-label="Reset filters" className="flex size-[30px] items-center justify-center rounded-full bg-[#20937c] text-white">
          <Icon className="size-[18px]" sw={1.7}><path d="M3 6h7.500a5.400 5.400 0 1 1-5.300 6.500M6.200 2.500L2.700 6l3.500 3.500" /></Icon>
        </button>
        <button aria-label="Bookmarks" className={toolBtn + " ml-5 w-[64px] gap-3"}>
          <Icon className="size-5" sw={1.6}><path d="M3.500 1h12v18l-6-4.300-6 4.300z" /></Icon><Chevron className="size-[10px]" />
        </button>
        <button aria-label="View" className={toolBtn + " w-[58px] gap-3"}>
          <Icon className="h-5 w-[21px]" box="0 0 21 20" sw={1.7}><rect x="1" y="3" width="19" height="14" rx="1" /></Icon><Chevron className="size-[10px]" />
        </button>
        <span className="h-[38px] w-px bg-[#b5b5b5]" />
        <button aria-label="Refresh" className={toolBtn + " ml-[14px] w-[39px]"}>
          <Icon className="size-[18px]" sw={1.5}><path d="M17.500 10a7.500 7.500 0 1 1-2.400-5.500l2.200 2M17.800 1.800v5h-5" /></Icon>
        </button>
        <button aria-label="Comment" className={toolBtn + " w-10"}>
          <Icon className="size-5" sw={1.5}><path d="M1 2h18v12.500H8.500L4.500 18.500v-4H1z" /></Icon>
        </button>
        <button aria-label="Favorite" className={toolBtn + " w-[28px]"}>
          <Icon className="size-[18px]" sw={1.5}><path d="M10 1.500l2.500 5.800 6.300.6-4.800 4.200 1.500 6.300L10 15l-5.500 3.400L6 12.100 1.200 7.900l6.300-.6z" /></Icon>
        </button>
      </div>
    </nav>
  );
}

function Card({ value, label, className }: { value: string; label: string; className: string }) {
  return (
    <div className={"flex flex-col items-center " + className}>
      <div className="font-[Roboto] text-[62px] leading-[76px] font-medium text-[#252423]">{value}</div>
      <div className="text-[19px] leading-6 text-[#666]">{label}</div>
    </div>
  );
}

function MapIcons() {
  const b = "flex w-[35px] justify-center";
  return (
    <div className="-mr-[7px] flex items-center text-[#555]">
      <button aria-label="Pin" className={b}><Icon className="size-4" sw={1.3}><path d="M12 1.500l6.500 6.500-5 2.500-1.500 5-7-7 4.700-1.700zM8 12.500L1.500 18.500" /></Icon></button>
      <button aria-label="Copy" className={b + " text-[#c4c4c4]"}><Icon className="size-4" sw={1.3}><rect x="6" y="1" width="11" height="14.500" rx="2" /><path d="M3.500 4v11.500a3 3 0 0 0 3 3h7" /></Icon></button>
      <button aria-label="Alert" className={b}><Bell className="size-4" /></button>
      <button aria-label="Filter" className={b}><Icon className="size-4" sw={1.4}><path d="M1 4h18M4.500 10h11M8 16h4" /></Icon></button>
      <button aria-label="Focus mode" className={b}><Icon className="size-4" sw={1.4}><path d="M8 2H3.500a2 2 0 0 0-2 2v12.500a2 2 0 0 0 2 2H16a2 2 0 0 0 2-2V12M12 1.500h6.500V8M18 2l-7 7M1.500 11.500h5a2 2 0 0 1 2 2v5" /></Icon></button>
      <button aria-label="More" className={b}><svg viewBox="0 0 14 4" className="h-1 w-[14px]" fill="#555"><circle cx="2" cy="2" r="1.500" /><circle cx="7" cy="2" r="1.500" /><circle cx="12" cy="2" r="1.500" /></svg></button>
    </div>
  );
}

export default function App() {
  const [state, setState] = useState("Alabama");
  const [zoom, setZoom] = useState(49);
  return (
    <div className="flex h-screen flex-col overflow-hidden bg-white font-['Open_Sans','Noto_Sans',sans-serif]">
      <TopBar />
      <ToolBar />
      <main className="flex min-h-0 flex-1">
        <div role="radiogroup" aria-labelledby="slicer-title" className="ml-[133px] flex min-h-0 w-[239px] shrink-0 flex-col overflow-hidden">
          <h2 id="slicer-title" className="h-[30px] shrink-0 pt-[7px] font-[Roboto] text-[17px] leading-5 font-medium text-[#252423]">State</h2>
          <div className="flex min-h-0 flex-1 justify-between">
            <div className="min-h-0">
              {STATES.map((s) => (
                <label key={s} className="flex h-9 items-center gap-3 whitespace-nowrap text-[19px] text-[#333]">
                  <input
                    type="radio"
                    name="state"
                    checked={state === s}
                    onChange={() => setState(s)}
                    className="ml-px size-4 appearance-none rounded-full border border-[#666] bg-white checked:border-[#222] checked:bg-[#222] checked:shadow-[inset_0_0_0_2px_#fff]"
                  />
                  {s}
                </label>
              ))}
            </div>
            <div className="h-[391px] w-[10px] bg-[#8a8a8a]" />
          </div>
        </div>

        <div className="mr-[110px] ml-[35px] flex min-w-0 flex-1 flex-col pb-[6px]">
          <section className="flex h-[216px] shrink-0 pr-3">
            <div className="flex flex-1 justify-center pt-[50px] font-[Roboto] text-[58px] leading-[76px] font-medium text-[#252423]">{state}</div>
            <div className="ml-3 w-[245px] pt-[18px]">
              <h2 className="w-[235px] font-[Roboto] text-[20px] leading-6 font-medium text-[#252423]">Sum of 2018 Deaths per 100 million vehicle miles traveled</h2>
              <Gauge />
            </div>
            <div className="ml-3 w-[237px] pt-5">
              <h2 className="w-[215px] font-[Roboto] text-[20px] leading-6 font-medium text-[#252423]">Sum of Fatalities and Average of Target by Year</h2>
              <div className="relative mt-1 h-[109px]">
                <svg viewBox="0 0 237 109" preserveAspectRatio="none" className="absolute inset-0 size-full" aria-hidden="true">
                  <path d="M0 0L20 50 43 98 65 93 86 81 130 97 151 109 172 97 193 10 215 61 237 59V109H0z" fill="#f6d9dd" />
                </svg>
                <div className="relative flex items-center justify-center gap-2 pt-2 font-[Roboto] text-[#d64550]">
                  <span className="text-[62px] leading-[66px] font-medium">953</span>
                  <span className="text-[22px] leading-[66px]">!</span>
                </div>
                <div className="relative text-center text-[19px] leading-6 text-[#333]">Goal: 725.91 (-227)</div>
              </div>
            </div>
            <div className="mt-4 ml-[7px] h-[194px] w-[222px] border border-b-2 border-[#555]">
              <h2 className="bg-[#dbf80c] pb-1 text-center font-[Roboto] text-[30px] leading-[38px] font-medium text-[#252423]">Instructions</h2>
              <p className="pr-2 pl-[7px] text-[17px] leading-[25px] text-[#333]">Right Click on<br />highlighted area on map below to drill through to Fatalities and Mileage of that state per year</p>
            </div>
          </section>

          <section className="flex h-[167px] shrink-0 pt-12">
            <Card value="785.0…" label="Sum of Miles (millions)" className="flex-1" />
            <Card value="11K" label="Sum of Fatalities" className="mr-[385px] w-[362px]" />
          </section>

          <section className="flex min-h-0 flex-1 flex-col">
            <div className="flex h-[34px] shrink-0 items-center justify-between">
              <h2 className="font-[Roboto] text-[20px] font-medium text-[#252423]">State</h2>
              <div className="pt-2"><MapIcons /></div>
            </div>
            <div className="relative min-h-0 flex-1 overflow-hidden bg-[#efeeea]">
              <MapDrawing />
              <div className="absolute bottom-[10px] left-[7px] flex items-center gap-[3px] text-[11px] leading-4 text-[#666]">
                <svg viewBox="0 0 13 13" className="size-[13px]" aria-hidden="true"><path d="M0 0h6v6H0z" fill="#f25022" /><path d="M7 0h6v6H7z" fill="#7fba00" /><path d="M0 7h6v6H0z" fill="#00a4ef" /><path d="M7 7h6v6H7z" fill="#ffb900" /></svg>
                Microsoft Bing
              </div>
              <div className="absolute right-[31px] bottom-[9px] font-['Liberation_Sans',sans-serif] text-[11px] leading-3 whitespace-nowrap text-black [text-shadow:0_0_2px_#fff,1px_1px_1px_#fff]">
                © 2025 TomTom, © 2025 Microsoft Corporation, <a href="#osm" className="text-[#2a41b8] underline">© OpenStreetMap</a>
                <a href="#terms" className="ml-2 text-[#2a41b8] underline">Terms</a>
              </div>
            </div>
          </section>
        </div>

        <aside className="flex w-[34px] shrink-0 flex-col items-center border-l border-[#b0b0b0] pt-[18px] pl-[9px] text-[#252423]">
          <button aria-label="Expand filters" className="flex"><Icon className="size-[11px]" box="0 0 12 12" sw={1.6}><path d="M6 1.500L1.500 6 6 10.500M10.500 1.500L6 6l4.500 4.500" /></Icon></button>
          <Icon className="mt-7 size-3" box="0 0 12 12" sw={1.5}><path d="M2 4.500v3M6 2.500v7M10.500 .8v10.400" /></Icon>
          <h2 className="mt-3 text-[18px] leading-6 font-semibold [writing-mode:vertical-rl]">Filters</h2>
        </aside>
      </main>

      <footer className="flex h-[27px] shrink-0 items-center justify-end border-t border-[#dcdcdc] bg-[#f4f4f4] pt-[3px] pr-4 text-[#555]">
        <button aria-label="Zoom out" className="w-4 text-[18px] leading-5 font-semibold">-</button>
        <input
          type="range"
          aria-label="Zoom"
          value={zoom}
          onChange={(e) => setZoom(Number(e.target.value))}
          className="h-[14px] w-[125px] appearance-none bg-[linear-gradient(#666,#666)] bg-[length:100%_1px] bg-center bg-no-repeat [&::-webkit-slider-thumb]:h-[14px] [&::-webkit-slider-thumb]:w-[5px] [&::-webkit-slider-thumb]:appearance-none [&::-webkit-slider-thumb]:bg-[#5f5f5f]"
        />
        <button aria-label="Zoom in" className="w-[22px] text-[18px] leading-5 font-semibold">+</button>
        <span className="ml-[10px] w-[54px] text-[15px] leading-5 text-[#666]">99%</span>
        <button aria-label="Fit to page">
          <Icon className="h-[14px] w-[18px]" box="0 0 18 14" sw={1.3}><rect x="1" y="1" width="16" height="12" rx="2" /><path d="M4 5.500V4h2M14 5.500V4h-2M4 8.500V10h2M14 8.500V10h-2" /></Icon>
        </button>
      </footer>
    </div>
  );
}
